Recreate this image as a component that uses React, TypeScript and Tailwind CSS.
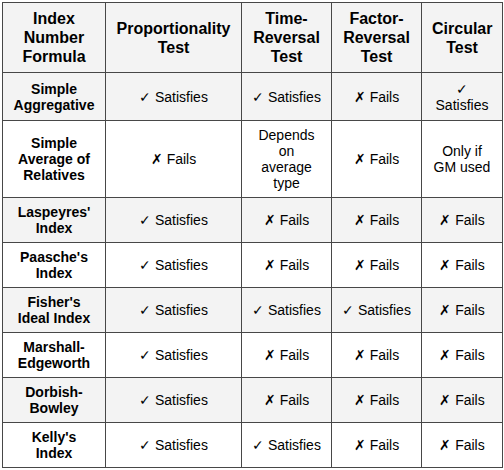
import React from 'react';

// Index number formulae vs. the tests of adequacy
type Cell = { mark?: '✓' | '✗'; text: string; stack?: boolean };

const OK: Cell = { mark: '✓', text: 'Satisfies' };
const NO: Cell = { mark: '✗', text: 'Fails' };

const headers = ['Index Number Formula', 'Proportionality Test', 'Time-Reversal Test', 'Factor-Reversal Test', 'Circular Test'];

const rows: { name: string; cells: Cell[]; h?: string }[] = [
  { name: 'Simple Aggregative', cells: [OK, OK, NO, { mark: '✓', text: 'Satisfies', stack: true }], h: 'h-[48px]' },
  { name: 'Simple Average of Relatives', cells: [NO, { text: 'Depends on average type' }, NO, { text: 'Only if GM used' }] },
  { name: "Laspeyres' Index", cells: [OK, NO, NO, NO] },
  { name: "Paasche's Index", cells: [OK, NO, NO, NO] },
  { name: "Fisher's Ideal Index", cells: [OK, OK, OK, NO] },
  { name: 'Marshall-Edgeworth', cells: [OK, NO, NO, NO] },
  { name: 'Dorbish-Bowley', cells: [OK, NO, NO, NO] },
  { name: "Kelly's Index", cells: [OK, OK, NO, NO] },
];

const cellBase = 'border border-[#474747] px-[10px] py-[6px] text-center align-middle';

function Mark({ m }: { m: string }) {
  return <span className="font-['DejaVu_Sans',sans-serif] font-extralight">{m}</span>;
}

function Body({ c }: { c: Cell }) {
  if (!c.mark) return <>{c.text}</>;
  if (c.stack)
    return (
      <>
        <Mark m={c.mark} />
        <br />
        {c.text}
      </>
    );
  return (
    <span className="whitespace-nowrap">
      <Mark m={c.mark} /> {c.text}
    </span>
  );
}

export default function App() {
  return (
    <div className="p-[2px] bg-white font-['Liberation_Sans',Arial,sans-serif] text-black">
      <table className="w-[500px] table-fixed border-collapse">
        <colgroup>
          <col className="w-[103px]" />
          <col className="w-[136px]" />
          <col className="w-[90px]" />
          <col className="w-[90px]" />
          <col className="w-[81px]" />
        </colgroup>
        <thead>
          <tr className="bg-[#f3f3f3]">
            {headers.map((h) => (
              <th key={h} className={`${cellBase} text-[16px] leading-[19px] font-bold`}>
                {h}
              </th>
            ))}
          </tr>
        </thead>
        <tbody>
          {rows.map((row, i) => (
            <tr key={row.name} className={`${i % 2 === 0 ? 'bg-[#f3f3f3]' : 'bg-white'} ${row.h ?? ''}`}>
              <td className={`${cellBase} text-[14px] leading-4 font-bold`}>{row.name}</td>
              {row.cells.map((c, j) => (
                <td key={j} className={`${cellBase} text-[14px] leading-4`}>
                  <Body c={c} />
                </td>
              ))}
            </tr>
          ))}
        </tbody>
      </table>
    </div>
  );
}
